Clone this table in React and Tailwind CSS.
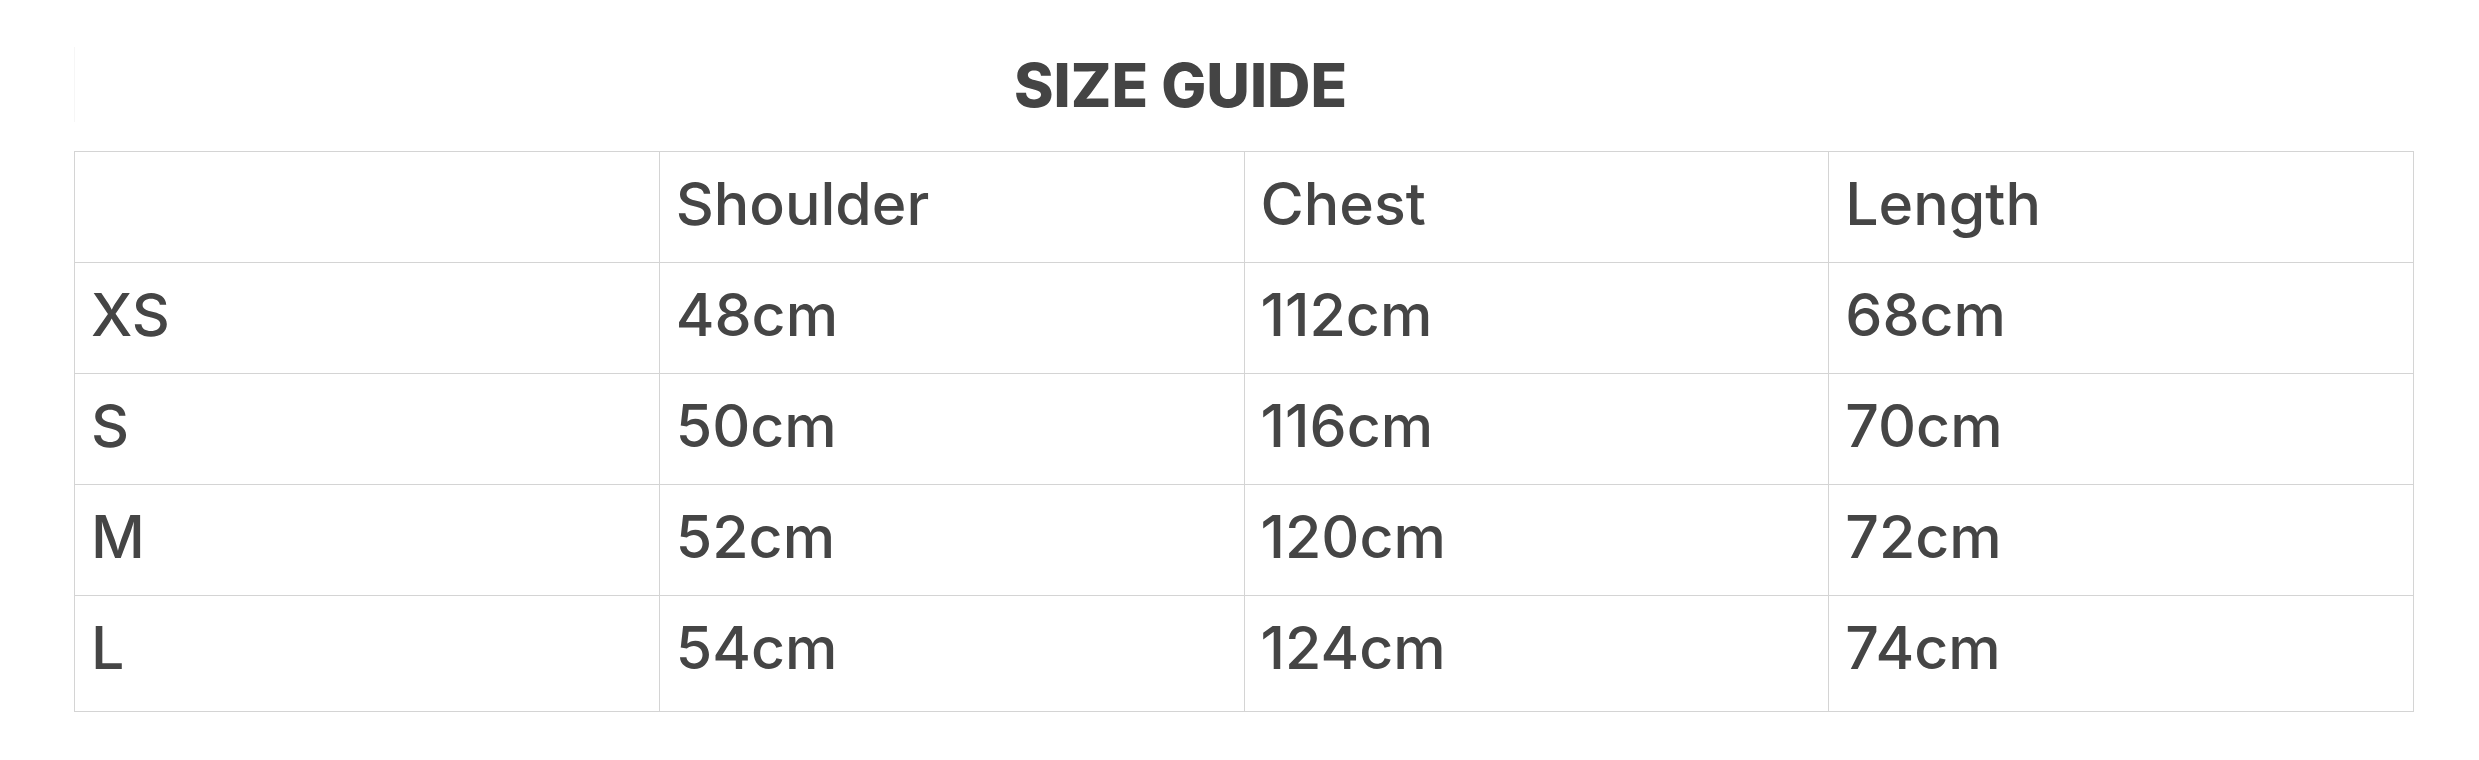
import React from "react";

const headers = ["", "Shoulder", "Chest", "Length"];
const rows = [
  ["XS", "48cm", "112cm", "68cm"],
  ["S", "50cm", "116cm", "70cm"],
  ["M", "52cm", "120cm", "72cm"],
  ["L", "54cm", "124cm", "74cm"],
];

function Cell({ children, last }) {
  return (
    <div
      className={`border-r border-b border-[#d4d4d4] px-4 pt-[22px] text-[59px] leading-none font-medium text-[#454545] ${
        last ? "h-[116px]" : "h-[111px]"
      }`}
    >
      {children}
    </div>
  );
}

export default function App() {
  return (
    <div
      className="w-[2479px] h-[760px] bg-white pt-[47px] pl-[74px]"
      style={{ fontFamily: 'Inter, "Liberation Sans", Arial, sans-serif' }}
    >
      <div className="w-[2212px] h-[75px] flex items-center justify-center border-l border-[#f6f6f6]">
        <h1 className="text-[60px] leading-none font-extrabold text-[#444444]">SIZE GUIDE</h1>
      </div>
      <div className="mt-[29px] w-[2340px] grid grid-cols-4 border-l border-t border-[#d4d4d4]">
        {headers.map((h, i) => (
          <Cell key={"h" + i}>{h}</Cell>
        ))}
        {rows.map((r, ri) =>
          r.map((c, ci) => (
            <Cell key={ri + "-" + ci} last={ri === rows.length - 1}>
              {c}
            </Cell>
          ))
        )}
      </div>
    </div>
  );
}
